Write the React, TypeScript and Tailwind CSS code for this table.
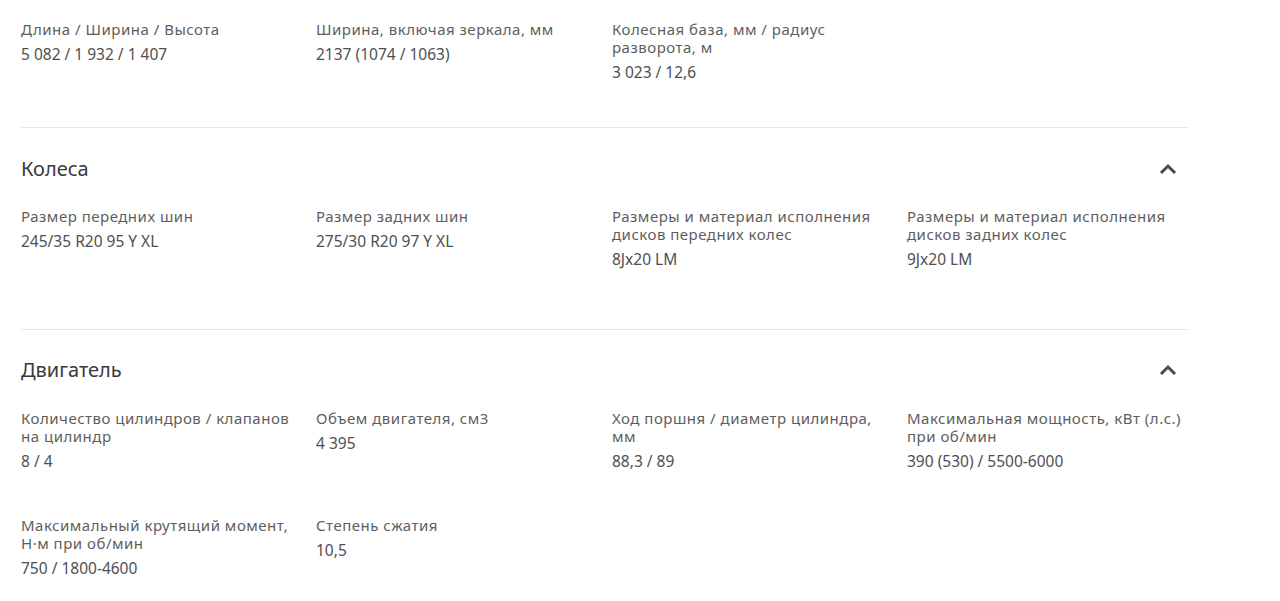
import React from "react";

type Spec = { label: string; value: string };

const dimensions: Spec[] = [
  { label: "Длина / Ширина / Высота", value: "5 082 / 1 932 / 1 407" },
  { label: "Ширина, включая зеркала, мм", value: "2137 (1074 / 1063)" },
  { label: "Колесная база, мм / радиус разворота, м", value: "3 023 / 12,6" },
];

const wheels: Spec[] = [
  { label: "Размер передних шин", value: "245/35 R20 95 Y XL" },
  { label: "Размер задних шин", value: "275/30 R20 97 Y XL" },
  { label: "Размеры и материал исполнения дисков передних колес", value: "8Jx20 LM" },
  { label: "Размеры и материал исполнения дисков задних колес", value: "9Jx20 LM" },
];

const engine: Spec[] = [
  { label: "Количество цилиндров / клапанов на цилиндр", value: "8 / 4" },
  { label: "Объем двигателя, см3", value: "4 395" },
  { label: "Ход поршня / диаметр цилиндра, мм", value: "88,3 / 89" },
  { label: "Максимальная мощность, кВт (л.с.) при об/мин", value: "390 (530) / 5500-6000" },
  { label: "Максимальный крутящий момент, Н·м при об/мин", value: "750 / 1800-4600" },
  { label: "Степень сжатия", value: "10,5" },
];

function SpecGrid({ items }: { items: Spec[] }) {
  return (
    <div className="grid grid-cols-[295px_296px_295px_295px] gap-y-[15px]">
      {items.map((s) => (
        <div key={s.label} className="min-h-[92px] pr-[12px]">
          <p className="text-[15px] leading-[18px] tracking-[0.5px] text-[#5e5e5e]">{s.label}</p>
          <p className="mt-[7px] text-[15.5px] leading-[18px] text-[#505050]">{s.value}</p>
        </div>
      ))}
    </div>
  );
}

function SectionHeader({ title }: { title: string }) {
  return (
    <div className="flex items-center justify-between h-[24px]">
      <h2 className="text-[20px] leading-[24px] text-[#3a3a3a]">{title}</h2>
      <svg width="18" height="12" viewBox="0 0 18 12" className="mr-[11px]">
        <path d="M2 10 L9 3 L16 10" fill="none" stroke="#4a4a4a" strokeWidth="3" />
      </svg>
    </div>
  );
}

export default function App() {
  return (
    <div
      className="w-[1280px] h-[601px] bg-white overflow-hidden"
      style={{ fontFamily: '"Noto Sans", "Open Sans", sans-serif' }}
    >
      <div className="ml-[21px] w-[1167px]">
        {/* Размеры */}
        <div className="pt-[20px] pb-[15px] border-b border-[#e6e6e6]">
          <SpecGrid items={dimensions} />
        </div>

        {/* Колеса */}
        <div className="pt-[29px] pb-[30px] border-b border-[#e6e6e6]">
          <SectionHeader title="Колеса" />
          <div className="mt-[26px]">
            <SpecGrid items={wheels} />
          </div>
        </div>

        {/* Двигатель */}
        <div className="pt-[28px]">
          <SectionHeader title="Двигатель" />
          <div className="mt-[27px]">
            <SpecGrid items={engine} />
          </div>
        </div>
      </div>
    </div>
  );
}
